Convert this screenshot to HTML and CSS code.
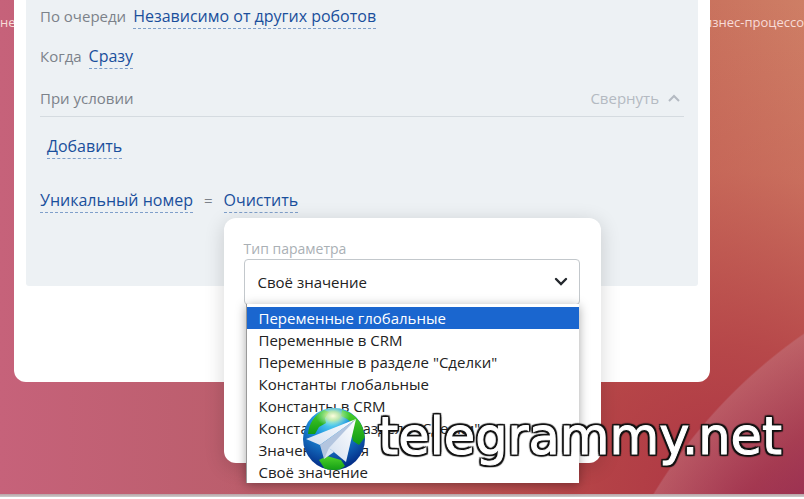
FILE: index.html
```
<!DOCTYPE html>
<html lang="ru">
<head>
    <meta charset="UTF-8">
    <meta name="viewport" content="width=device-width, initial-scale=1.0">
    <title>Настройка робота</title>
    <link rel="stylesheet" href="styles.css">
</head>
<body>
    <div class="desktop">
        <div class="side side-left">не</div>

        <main class="panel">
            <div class="settings">
                <div class="row">
                    <span class="caption">По очереди</span>
                    <a href="#" class="link">Независимо от других роботов</a>
                </div>
                <div class="row">
                    <span class="caption">Когда</span>
                    <a href="#" class="link">Сразу</a>
                </div>

                <div class="condition-head">
                    <span class="caption">При условии</span>
                    <button type="button" class="collapse">
                        Свернуть
                        <svg width="12" height="8" viewBox="0 0 12 8"><path d="M1 7l5-5 5 5" fill="none" stroke="currentColor" stroke-width="2"/></svg>
                    </button>
                </div>

                <div class="row row-add">
                    <a href="#" class="link">Добавить</a>
                </div>

                <div class="row row-condition">
                    <a href="#" class="link">Уникальный номер</a>
                    <span class="equals">=</span>
                    <div class="value">
                        <a href="#" class="link">Очистить</a>
                        <div class="popup">
                            <label class="popup-label" for="paramType">Тип параметра</label>
                            <div class="select-box">
                                <select id="paramType" class="select">
                                    <option>Своё значение</option>
                                </select>
                                <svg class="select-arrow" width="14" height="10" viewBox="0 0 14 10"><path d="M2 2l5 5 5-5" fill="none" stroke="#24282d" stroke-width="2.4" stroke-linecap="round"/></svg>
                                <ul class="menu" role="listbox" aria-label="Тип параметра">
                                    <li class="menu-item active" role="option" aria-selected="true">Переменные глобальные</li>
                                    <li class="menu-item" role="option">Переменные в CRM</li>
                                    <li class="menu-item" role="option">Переменные в разделе "Сделки"</li>
                                    <li class="menu-item" role="option">Константы глобальные</li>
                                    <li class="menu-item" role="option">Константы в CRM</li>
                                    <li class="menu-item" role="option">Константы в разделе "Сделки"</li>
                                    <li class="menu-item" role="option">Значение поля</li>
                                    <li class="menu-item" role="option">Своё значение</li>
                                </ul>
                            </div>
                        </div>
                    </div>
                </div>
            </div>
        </main>

        <div class="side side-right">бизнес-процессо</div>
    </div>
    <div class="bottom-bar"></div>

    <div class="watermark">
        <svg class="globe" width="64" height="64" viewBox="0 0 64 64">
            <defs>
                <radialGradient id="sea" cx="45%" cy="20%" r="75%">
                    <stop offset="0" stop-color="#5fe0f5"/>
                    <stop offset="0.4" stop-color="#1c8fdc"/>
                    <stop offset="1" stop-color="#04308a"/>
                </radialGradient>
                <linearGradient id="land" x1="0" y1="0" x2="0" y2="1">
                    <stop offset="0" stop-color="#4ed22a"/>
                    <stop offset="1" stop-color="#0f9a14"/>
                </linearGradient>
                <radialGradient id="shine">
                    <stop offset="0" stop-color="#fffde0"/>
                    <stop offset="0.4" stop-color="#d8f0a0" stop-opacity="0.8"/>
                    <stop offset="1" stop-color="#80e0e8" stop-opacity="0"/>
                </radialGradient>
                <linearGradient id="wing" x1="1" y1="0" x2="0" y2="1">
                    <stop offset="0" stop-color="#ffffff"/>
                    <stop offset="1" stop-color="#d3dff0"/>
                </linearGradient>
                <clipPath id="ball"><circle cx="32" cy="32" r="31"/></clipPath>
            </defs>
            <g clip-path="url(#ball)">
                <rect width="64" height="64" fill="url(#sea)"/>
                <path d="M6 27C7 17 12 8 22 3l5 2-4 6 1 5-7 4-4 7z" fill="url(#land)"/>
                <path d="M40 3c9 2 15 7 20 15l3 12-6 8-6-4-2-10 3-7-7-5-6-3z" fill="url(#land)"/>
                <path d="M17 53l8-4 14 4 4 6-7 5H24z" fill="url(#land)"/>
                <ellipse cx="31" cy="9" rx="17" ry="11" fill="url(#shine)"/>
            </g>
            <!-- paper plane -->
            <path d="M4 32L54 12 18 38z" fill="url(#wing)"/>
            <path d="M54 12L18 38l4 14 6-10z" fill="#b3c5df"/>
            <path d="M54 12L27 41l17 14z" fill="url(#wing)"/>
            <path d="M22 52l5-11 5 4z" fill="#dce7f5"/>
        </svg>
        <span class="watermark-text">telegrammy.net</span>
    </div>
</body>
</html>
```
FILE: styles.css
```
* {
    box-sizing: border-box;
}
body {
    margin: 0;
    min-height: 100vh;
    display: flex;
    flex-direction: column;
    position: relative;
    overflow: hidden;
    font-family: "Open Sans", "Noto Sans", sans-serif;
    font-size: 16px;
    line-height: 24px;
    background-color: white;
}
.desktop {
    flex: 1;
    display: flex;
    align-items: flex-start;
    background:
        radial-gradient(circle 527px at calc(100% + 300px) calc(100% + 272px), rgba(120, 20, 90, 0.6) 65%, rgba(150, 60, 100, 0.4) 85%, rgba(200, 140, 155, 0.35) 99.7%, transparent 100%),
        radial-gradient(ellipse 65% 100% at 92% 100%, #ac3343 0%, rgba(176, 56, 66, 0.75) 30%, rgba(190, 75, 75, 0.3) 65%, transparent 100%),
        linear-gradient(to right, #c6627a 0%, #bb5e6c 30%, #c46656 75%, #ce7e65 100%);
}
.bottom-bar {
    height: 5px;
    background: linear-gradient(to bottom, #b9a3a6, #c9c5c5 50%, white 60%);
}
.side {
    display: flex;
    overflow: hidden;
    padding-top: 10px;
    font-size: 13px;
    color: #f8dcd8;
    white-space: nowrap;
}
.side-left {
    flex: 0 0 14px;
}
.side-right {
    flex: 0 0 94px;
    justify-content: flex-end;
}
.panel {
    flex: 1;
    padding: 0 12px 96px;
    background-color: white;
    border-radius: 0 0 12px 12px;
}
.settings {
    padding: 4px 14px 73px;
    background-color: #edf1f4;
    border-radius: 0 0 3px 3px;
}
.row {
    display: flex;
    align-items: baseline;
    gap: 7px;
    margin-bottom: 15px;
}
.caption {
    font-size: 15px;
    color: #7c828a;
}
.link {
    display: inline-block;
    color: #1a4f9c;
    text-decoration: none;
    border-bottom: 1px dashed #7f9fca;
}
.condition-head {
    display: flex;
    justify-content: space-between;
    margin-top: 17px;
    padding-bottom: 6px;
    border-bottom: 1px solid #d5dbe0;
}
.collapse {
    display: flex;
    align-items: center;
    gap: 9px;
    padding: 0 4px 0 0;
    border: none;
    background: none;
    font: inherit;
    font-size: 15px;
    color: #b4bac2;
    cursor: pointer;
}
.row-add {
    margin: 17px 0 29px;
    padding-left: 7px;
}
.row-condition {
    gap: 11px;
    margin-bottom: 0;
}
.equals {
    font-size: 15px;
    color: #7c828a;
}
.value {
    position: relative;
}
.popup {
    position: absolute;
    top: 30px;
    left: 0;
    width: 377px;
    padding: 21px 21px 158px 20px;
    background-color: white;
    border-radius: 12px;
    box-shadow: 0 4px 20px rgba(0, 0, 0, 0.16);
}
.popup-label {
    display: block;
    font-size: 14px;
    line-height: 20px;
    color: #aab0b5;
}
.select-box {
    position: relative;
}
.select {
    display: block;
    width: 100%;
    height: 46px;
    padding: 0 13px;
    border: 1px solid #c3c8cc;
    border-radius: 4px;
    background-color: white;
    font: inherit;
    font-size: 15px;
    color: #222;
    appearance: none;
}
.select-arrow {
    position: absolute;
    top: 18px;
    right: 12px;
}
.menu {
    position: absolute;
    top: 45px;
    left: 2px;
    right: 1px;
    margin: 0;
    padding: 3px 0 0;
    list-style: none;
    background-color: white;
    border-left: 1px solid #999;
    box-shadow: 0 2px 10px rgba(0, 0, 0, 0.35);
}
.menu-item {
    padding: 0 12px;
    font-size: 15px;
    line-height: 22px;
    color: #222;
    white-space: nowrap;
}
.menu-item.active {
    background-color: #1a66cf;
    color: white;
}
.watermark {
    position: absolute;
    right: 22px;
    bottom: 28px;
    display: flex;
    align-items: flex-start;
    gap: 12px;
}
.watermark-text {
    font-family: "DejaVu Sans", sans-serif;
    font-size: 51px;
    line-height: 60px;
    color: white;
    -webkit-text-stroke: 1px white;
    text-shadow:
        2px 0 1px #111, -2px 0 1px #111, 0 2px 1px #111, 0 -2px 1px #111,
        2px 2px 1px #111, -2px 2px 1px #111, 2px -2px 1px #111, -2px -2px 1px #111;
}
```
